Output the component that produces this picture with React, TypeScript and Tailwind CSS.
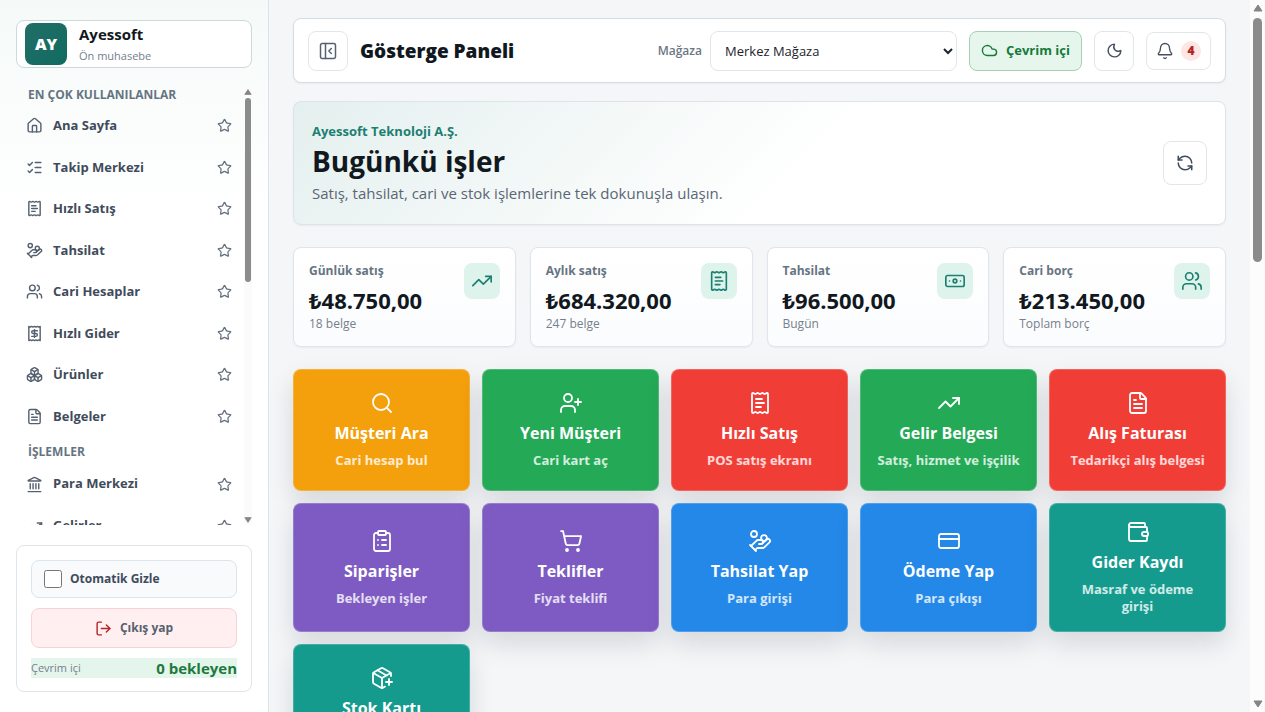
import {
  Banknote,
  Bell,
  Boxes,
  ClipboardList,
  Cloud,
  CreditCard,
  FileText,
  HandCoins,
  House,
  Landmark,
  ListChecks,
  LogOut,
  Moon,
  PackagePlus,
  PanelLeftClose,
  Receipt,
  ReceiptText,
  RefreshCcw,
  Search,
  ShoppingCart,
  Star,
  TrendingUp,
  UserPlus,
  Users,
  Wallet,
  type LucideIcon,
} from "lucide-react";
import clsx from "clsx";
import { useState } from "react";

type NavEntry = { label: string; icon: LucideIcon };

type Stat = {
  label: string;
  value: string;
  note: string;
  icon: LucideIcon;
};

type Tile = {
  title: string;
  subtitle: string;
  icon: LucideIcon;
  color: string;
};

const favourites: NavEntry[] = [
  { label: "Ana Sayfa", icon: House },
  { label: "Takip Merkezi", icon: ListChecks },
  { label: "Hızlı Satış", icon: ReceiptText },
  { label: "Tahsilat", icon: HandCoins },
  { label: "Cari Hesaplar", icon: Users },
  { label: "Hızlı Gider", icon: Receipt },
  { label: "Ürünler", icon: Boxes },
  { label: "Belgeler", icon: FileText },
];

const operations: NavEntry[] = [
  { label: "Para Merkezi", icon: Landmark },
  { label: "Gelirler", icon: TrendingUp },
];

const stats: Stat[] = [
  { label: "Günlük satış", value: "₺48.750,00", note: "18 belge", icon: TrendingUp },
  { label: "Aylık satış", value: "₺684.320,00", note: "247 belge", icon: ReceiptText },
  { label: "Tahsilat", value: "₺96.500,00", note: "Bugün", icon: Banknote },
  { label: "Cari borç", value: "₺213.450,00", note: "Toplam borç", icon: Users },
];

const tiles: Tile[] = [
  { title: "Müşteri Ara", subtitle: "Cari hesap bul", icon: Search, color: "bg-[#f49f0c]" },
  { title: "Yeni Müşteri", subtitle: "Cari kart aç", icon: UserPlus, color: "bg-[#24a957]" },
  { title: "Hızlı Satış", subtitle: "POS satış ekranı", icon: ReceiptText, color: "bg-[#f03e37]" },
  { title: "Gelir Belgesi", subtitle: "Satış, hizmet ve işçilik", icon: TrendingUp, color: "bg-[#24a957]" },
  { title: "Alış Faturası", subtitle: "Tedarikçi alış belgesi", icon: FileText, color: "bg-[#f03e37]" },
  { title: "Siparişler", subtitle: "Bekleyen işler", icon: ClipboardList, color: "bg-[#7e5bc2]" },
  { title: "Teklifler", subtitle: "Fiyat teklifi", icon: ShoppingCart, color: "bg-[#7e5bc2]" },
  { title: "Tahsilat Yap", subtitle: "Para girişi", icon: HandCoins, color: "bg-[#2388e8]" },
  { title: "Ödeme Yap", subtitle: "Para çıkışı", icon: CreditCard, color: "bg-[#2388e8]" },
  { title: "Gider Kaydı", subtitle: "Masraf ve ödeme girişi", icon: Wallet, color: "bg-[#149b8e]" },
  { title: "Stok Kartı", subtitle: "Ürün ve hizmet", icon: PackagePlus, color: "bg-[#149b8e]" },
];

function Arrow({ down = false, className }: { down?: boolean; className: string }) {
  return (
    <svg viewBox="0 0 10 8" className={className} fill="#858585" aria-hidden="true">
      <path d={down ? "M1 1h8L5 7z" : "M5 1l4 6H1z"} stroke="#858585" strokeLinejoin="round" />
    </svg>
  );
}

function NavList({ items, className }: { items: NavEntry[]; className: string }) {
  return (
    <ul className={clsx("grid auto-rows-fr", className)}>
      {items.map(({ label, icon: Icon }) => (
        <li key={label} className="flex items-center justify-between pr-3 pl-2.5">
          <a href="#" className="flex items-center gap-2.5 text-[13px] font-bold text-[#3f4b5b]">
            <Icon className="size-[17px] text-[#56616f]" />
            {label}
          </a>
          <button type="button" aria-label={`${label} favori`} className="text-[#66717e]">
            <Star className="size-[15px]" />
          </button>
        </li>
      ))}
    </ul>
  );
}

function Sidebar() {
  const [autoHide, setAutoHide] = useState(false);

  return (
    <aside className="flex w-[269px] shrink-0 flex-col border-r border-[#dbe3ea] bg-gradient-to-b from-[#f5faf9] via-white via-30% to-white px-4 py-5">
      <div className="flex h-12 shrink-0 items-center gap-3 rounded-lg border border-[#ccd9dc] bg-white pl-2">
        <div className="flex size-[42px] items-center justify-center rounded-lg bg-gradient-to-br from-[#216e66] to-[#0f6b61] text-base font-extrabold text-white">
          AY
        </div>
        <div>
          <p className="text-[15px] leading-5 font-bold text-[#111820]">Ayessoft</p>
          <p className="mt-1 text-[11px] leading-4 text-[#76808d]">Ön muhasebe</p>
        </div>
      </div>

      <div className="mt-4 flex min-h-0 flex-1">
        <nav className="min-w-0 flex-1 overflow-hidden">
          <h2 className="pl-3 text-xs leading-[21px] font-bold text-[#667482]">EN ÇOK KULLANILANLAR</h2>
          <NavList items={favourites} className="h-83" />
          <h2 className="mt-1 pl-3 text-xs leading-[22px] font-bold text-[#667482]">İŞLEMLER</h2>
          <NavList items={operations} className="h-21" />
        </nav>
        <div className="flex w-2 shrink-0 flex-col items-center justify-between bg-[#fbfbfb] pt-1 pb-px">
          <div className="flex flex-1 flex-col items-center gap-0.5">
            <Arrow className="h-2 w-2" />
            <div className="h-[43%] w-1.5 rounded-full bg-[#8b8b8b]" />
          </div>
          <Arrow down className="h-2 w-2" />
        </div>
      </div>

      <div className="mt-5 flex shrink-0 flex-col gap-2.5 rounded-lg border border-[#dfe5ea] bg-white px-3.5 pt-3.5 pb-[13px]">
        <label className="flex h-[38px] items-center gap-2 rounded-lg border border-[#dce5ec] bg-[#f8fafc] px-3 text-xs font-bold text-[#3f4b5b]">
          <input
            type="checkbox"
            className="size-[18px]"
            checked={autoHide}
            onChange={(e) => setAutoHide(e.target.checked)}
          />
          Otomatik Gizle
        </label>
        <button
          type="button"
          className="flex h-10 items-center justify-center gap-2 rounded-lg border border-[#f7d3d5] bg-[#ffeff0] text-xs font-bold text-[#56616f]"
        >
          <LogOut className="size-[17px] text-[#b3252b]" />
          Çıkış yap
        </button>
        <div className="flex items-center justify-between bg-[#e4f5eb]">
          <span className="text-[11px] text-[#76808d]">Çevrim içi</span>
          <strong className="text-[15px] leading-5 font-bold text-[#1c7a3e]">0 bekleyen</strong>
        </div>
      </div>
    </aside>
  );
}

function TopBar() {
  return (
    <header className="flex min-h-[65px] items-center justify-between rounded-lg border border-[#d3dde3] bg-white px-3.5 shadow-xs">
      <div className="flex items-center gap-3">
        <button
          type="button"
          aria-label="Menüyü daralt"
          className="flex size-10 items-center justify-center rounded-lg border border-[#e1e6eb] text-[#56616f]"
        >
          <PanelLeftClose className="size-5" strokeWidth={1.8} />
        </button>
        <h1 className="text-[19px] leading-7 font-extrabold text-[#111820]">Gösterge Paneli</h1>
      </div>

      <div className="flex items-center gap-3">
        <div className="flex items-center gap-2">
          <label htmlFor="store" className="text-xs font-semibold text-[#6c7784]">
            Mağaza
          </label>
          <select
            id="store"
            className="h-10 w-[247px] rounded-lg border border-[#e1e6eb] bg-white px-2.5 text-[13px] text-[#1b232c]"
          >
            <option>Merkez Mağaza</option>
          </select>
        </div>
        <button
          type="button"
          className="flex h-10 items-center gap-2 rounded-lg border border-[#a5d0b6] bg-[#e7f6ec] px-[11px] text-[13px] font-bold text-[#157a3a]"
        >
          <Cloud className="size-[17px]" />
          Çevrim içi
        </button>
        <button
          type="button"
          aria-label="Koyu tema"
          className="flex size-10 items-center justify-center rounded-lg border border-[#e1e6eb] text-[#46505e]"
        >
          <Moon className="size-[17px]" />
        </button>
        <button
          type="button"
          aria-label="Bildirimler"
          className="flex h-[38px] items-center gap-[7px] rounded-lg border border-[#e1e6eb] px-[9px] text-[#46505e]"
        >
          <Bell className="size-[18px]" strokeWidth={1.8} />
          <span className="flex size-5 items-center justify-center rounded-full bg-[#fde6e4] text-xs font-extrabold text-[#b3241c]">
            4
          </span>
        </button>
      </div>
    </header>
  );
}

function StatCard({ label, value, note, icon: Icon }: Stat) {
  return (
    <article className="flex justify-between rounded-lg border border-[#dfe5ea] bg-gradient-to-b from-white to-[#fbfcfe] px-[15px] pt-[15px] pb-[13px] shadow-xs">
      <div>
        <p className="text-xs leading-4 font-bold text-[#667482]">{label}</p>
        <p className="mt-1.5 text-[22px] leading-[30px] font-bold text-[#111820]">{value}</p>
        <p className="text-xs leading-[18px] text-[#76808d]">{note}</p>
      </div>
      <div className="flex size-9 items-center justify-center rounded-lg bg-[#ddf3ec] text-[#1c7f72]">
        <Icon className="size-[22px]" strokeWidth={1.8} />
      </div>
    </article>
  );
}

function ActionTile({ title, subtitle, icon: Icon, color }: Tile) {
  return (
    <button
      type="button"
      className={clsx(
        "flex min-h-[122px] flex-col items-center justify-center gap-[9px] rounded-lg border border-white/20 p-4 text-white shadow-[0_12px_26px_rgba(15,23,32,0.13)]",
        color,
      )}
    >
      <Icon className="size-6" strokeWidth={1.8} />
      <span className="text-base leading-[19px] font-bold">{title}</span>
      <span className="text-[13px] leading-[17px] font-bold text-white/80">{subtitle}</span>
    </button>
  );
}

export default function App() {
  return (
    <div className="flex h-screen overflow-hidden bg-[#f4f6f8] font-['Open_Sans','Noto_Sans',sans-serif]">
      <Sidebar />

      <main className="min-w-0 flex-1 overflow-hidden px-6 pt-[18px]">
        <TopBar />

        <section className="mt-[18px] flex items-center justify-between rounded-lg border border-[#dce4e8] bg-linear-135 from-[#e4f0ee] to-white to-55% px-[18px] py-[19px] shadow-xs">
          <div>
            <p className="text-[13px] leading-5 font-bold text-[#1c7f72]">Ayessoft Teknoloji A.Ş.</p>
            <h2 className="text-[28px] leading-10 font-bold text-[#111820]">Bugünkü işler</h2>
            <p className="text-[15px] leading-6 text-[#5b6674]">
              Satış, tahsilat, cari ve stok işlemlerine tek dokunuşla ulaşın.
            </p>
          </div>
          <button
            type="button"
            aria-label="Yenile"
            className="flex size-11 items-center justify-center rounded-lg border border-[#e1e6eb] bg-white text-[#3f4b5b]"
          >
            <RefreshCcw className="size-[18px]" />
          </button>
        </section>

        <section className="mt-[22px] grid grid-cols-4 gap-3.5">
          {stats.map((stat) => (
            <StatCard key={stat.label} {...stat} />
          ))}
        </section>

        <section className="mt-[22px] grid grid-cols-5 gap-3">
          {tiles.map((tile) => (
            <ActionTile key={tile.title} {...tile} />
          ))}
        </section>
      </main>

      {/* Page scroll rail */}
      <div className="flex w-[15px] shrink-0 flex-col items-center justify-between bg-[#fcfcfc] py-1">
        <div className="flex w-full flex-1 flex-col items-center gap-1.5">
          <Arrow className="h-2 w-2.5" />
          <div className="h-[35%] w-[9px] rounded-full bg-[#8b8b8b]" />
        </div>
        <Arrow down className="h-2 w-2.5" />
      </div>
    </div>
  );
}
